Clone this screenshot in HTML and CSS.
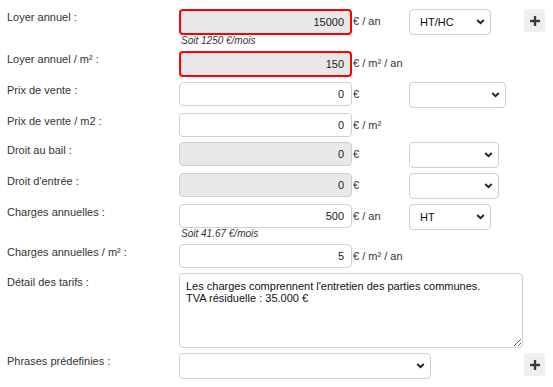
FILE: index.html
```html
<!DOCTYPE html>
<html lang="fr">
<head>
    <meta charset="UTF-8">
    <meta name="viewport" content="width=device-width, initial-scale=1.0">
    <title>Loyer et charges</title>
    <link rel="stylesheet" href="styles.css">
</head>
<body>
    <form class="price-form">
        <div class="row">
            <label class="label">Loyer annuel :</label>
            <div class="field">
                <input class="num error" type="text" value="15000" readonly>
                <div class="hint">Soit 1250 €/mois</div>
            </div>
            <span class="unit">€ / an</span>
            <div class="select-box select-short">
                <select><option>HT/HC</option></select>
                <svg class="chevron" viewBox="0 0 10 7"><polyline points="1.2,1.2 5,5 8.8,1.2"/></svg>
            </div>
            <button type="button" class="add"><svg viewBox="0 0 10 10"><rect x="3.8" y="0" width="2.4" height="10"/><rect x="0" y="3.8" width="10" height="2.4"/></svg></button>
        </div>

        <div class="row">
            <label class="label">Loyer annuel / m² :</label>
            <div class="field">
                <input class="num error" type="text" value="150" readonly>
            </div>
            <span class="unit">€ / m² / an</span>
        </div>

        <div class="row">
            <label class="label">Prix de vente :</label>
            <div class="field">
                <input class="num" type="text" value="0">
            </div>
            <span class="unit">€</span>
            <div class="select-box select-wide">
                <select><option></option></select>
                <svg class="chevron" viewBox="0 0 10 7"><polyline points="1.2,1.2 5,5 8.8,1.2"/></svg>
            </div>
        </div>

        <div class="row">
            <label class="label">Prix de vente / m2 :</label>
            <div class="field">
                <input class="num" type="text" value="0">
            </div>
            <span class="unit">€ / m²</span>
        </div>

        <div class="row">
            <label class="label">Droit au bail :</label>
            <div class="field">
                <input class="num" type="text" value="0" disabled>
            </div>
            <span class="unit">€</span>
            <div class="select-box select-mid">
                <select><option></option></select>
                <svg class="chevron" viewBox="0 0 10 7"><polyline points="1.2,1.2 5,5 8.8,1.2"/></svg>
            </div>
        </div>

        <div class="row">
            <label class="label">Droit d'entrée :</label>
            <div class="field">
                <input class="num" type="text" value="0" disabled>
            </div>
            <span class="unit">€</span>
            <div class="select-box select-mid">
                <select><option></option></select>
                <svg class="chevron" viewBox="0 0 10 7"><polyline points="1.2,1.2 5,5 8.8,1.2"/></svg>
            </div>
        </div>

        <div class="row">
            <label class="label">Charges annuelles :</label>
            <div class="field">
                <input class="num" type="text" value="500">
                <div class="hint">Soit 41.67 €/mois</div>
            </div>
            <span class="unit">€ / an</span>
            <div class="select-box select-short">
                <select><option>HT</option></select>
                <svg class="chevron" viewBox="0 0 10 7"><polyline points="1.2,1.2 5,5 8.8,1.2"/></svg>
            </div>
        </div>

        <div class="row">
            <label class="label">Charges annuelles / m² :</label>
            <div class="field">
                <input class="num" type="text" value="5">
            </div>
            <span class="unit">€ / m² / an</span>
        </div>

        <div class="row">
            <label class="label label-area">Détail des tarifs :</label>
            <textarea class="details">Les charges comprennent l'entretien des parties communes.
TVA résiduelle : 35.000 €</textarea>
        </div>

        <div class="row">
            <label class="label">Phrases prédefinies :</label>
            <div class="select-box select-phrase">
                <select><option></option></select>
                <svg class="chevron" viewBox="0 0 10 7"><polyline points="1.2,1.2 5,5 8.8,1.2"/></svg>
            </div>
            <button type="button" class="add"><svg viewBox="0 0 10 10"><rect x="3.8" y="0" width="2.4" height="10"/><rect x="0" y="3.8" width="10" height="2.4"/></svg></button>
        </div>
    </form>
</body>
</html>
```

FILE: styles.css
```css
body {
    margin: 0;
    background-color: #fff;
    font-family: "Liberation Sans", Arial, sans-serif;
    font-size: 11px;
    color: #333;
}

.price-form {
    width: 538px;
    padding: 9px 8px 0 7px;
}

.row {
    display: flex;
    align-items: flex-start;
    margin-bottom: 5px;
}

.label {
    width: 172px;
    flex-shrink: 0;
    padding-top: 2px;
    line-height: 13px;
}

.label-area {
    padding-top: 3px;
}

.field {
    width: 173px;
    flex-shrink: 0;
}

.num {
    display: block;
    box-sizing: border-box;
    width: 100%;
    height: 24px;
    margin: 0;
    padding: 0 7px;
    border: 1px solid #cfcfcf;
    border-radius: 4px;
    background-color: #fff;
    font-family: inherit;
    font-size: 11px;
    color: #222;
    text-align: right;
    outline: none;
}

.num:disabled {
    background-color: #e8e8e8;
    color: #222;
}

.num.error {
    height: 26px;
    border: 2px solid #f00;
    background-color: #e8e8e8;
    padding-right: 6px;
}

.hint {
    padding-left: 2px;
    font-size: 10px;
    line-height: 11px;
    font-style: italic;
    color: #333;
}

.unit {
    width: 57px;
    height: 24px;
    flex-shrink: 0;
    display: flex;
    align-items: center;
    padding-left: 1px;
    box-sizing: border-box;
    color: #333;
}

/* Selects */
.select-box {
    position: relative;
    flex-shrink: 0;
}

.select-box select {
    display: block;
    box-sizing: border-box;
    width: 100%;
    height: 26px;
    margin: 0;
    padding: 0 20px 0 10px;
    border: 1px solid #cfcfcf;
    border-radius: 4px;
    background-color: #fff;
    font-family: inherit;
    font-size: 11px;
    color: #111;
    appearance: none;
    -webkit-appearance: none;
    outline: none;
}

.select-short { width: 82px; }
.select-mid { width: 90px; }
.select-wide { width: 97px; }
.select-phrase { width: 252px; }

.chevron {
    position: absolute;
    right: 6px;
    top: 10px;
    width: 9px;
    height: 6px;
    pointer-events: none;
}

.chevron polyline {
    fill: none;
    stroke: #222;
    stroke-width: 2.2;
}

.add {
    margin-left: auto;
    width: 21px;
    height: 23px;
    padding: 0;
    border: none;
    border-radius: 3px;
    background-color: #efefef;
    display: flex;
    align-items: center;
    justify-content: center;
    cursor: pointer;
}

.add svg {
    width: 10px;
    height: 10px;
    fill: #3a3a3a;
}

.details {
    box-sizing: border-box;
    width: 344px;
    height: 75px;
    margin: 0;
    padding: 7px 6px;
    border: 1px solid #cfcfcf;
    border-radius: 4px;
    font-family: inherit;
    font-size: 11px;
    line-height: 11.5px;
    color: #111;
    outline: none;
}
```
